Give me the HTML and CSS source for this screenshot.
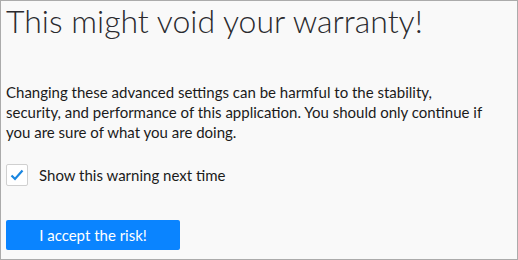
FILE: index.html
```html
<!DOCTYPE html>
<html lang="en">
<head>
    <meta charset="UTF-8">
    <title>Warning</title>
    <link rel="stylesheet" href="styles.css">
</head>
<body>
    <div class="window">
        <h1 class="title">This might void your warranty!</h1>
        <p class="message">Changing these advanced settings can be harmful to the stability,<br>security, and performance of this application. You should only continue if<br>you are sure of what you are doing.</p>
        <label class="check-row">
            <span class="checkbox">
                <svg width="14" height="12" viewBox="0 0 14 12"><path d="M1.5 6.5 L5 10 L12.5 1.5" fill="none" stroke="#1a86e0" stroke-width="2.2"/></svg>
            </span>
            Show this warning next time
        </label>
        <button class="accept">I accept the risk!</button>
    </div>
</body>
</html>
```

FILE: styles.css
```css
html, body {
    margin: 0;
    height: 100%;
}
body {
    font-family: Lato, 'Open Sans', sans-serif;
    color: #1b1b1b;
}
.window {
    box-sizing: border-box;
    height: 260px;
    width: 518px;
    background: #f9f9f9;
    border: 1px solid #ababab;
    padding: 0 5px;
}
.title {
    margin: 0;
    font-size: 32px;
    font-weight: 300;
    line-height: normal;
    color: #2a2a2e;
}
.message {
    margin: 42px 0 0;
    font-size: 15px;
    line-height: 20px;
}
.check-row {
    display: flex;
    align-items: center;
    gap: 11px;
    margin-top: 22px;
    font-size: 15px;
}
.checkbox {
    box-sizing: border-box;
    width: 22px;
    height: 22px;
    background: #fff;
    border: 1px solid #d0d0d0;
    border-radius: 2px;
    display: flex;
    align-items: center;
    justify-content: center;
}
.accept {
    margin-top: 34px;
    width: 174px;
    height: 30px;
    border: none;
    border-radius: 2px;
    background: #0a84ff;
    color: #fff;
    font-family: Lato, 'Open Sans', sans-serif;
    font-size: 15px;
    padding: 0;
}
```
